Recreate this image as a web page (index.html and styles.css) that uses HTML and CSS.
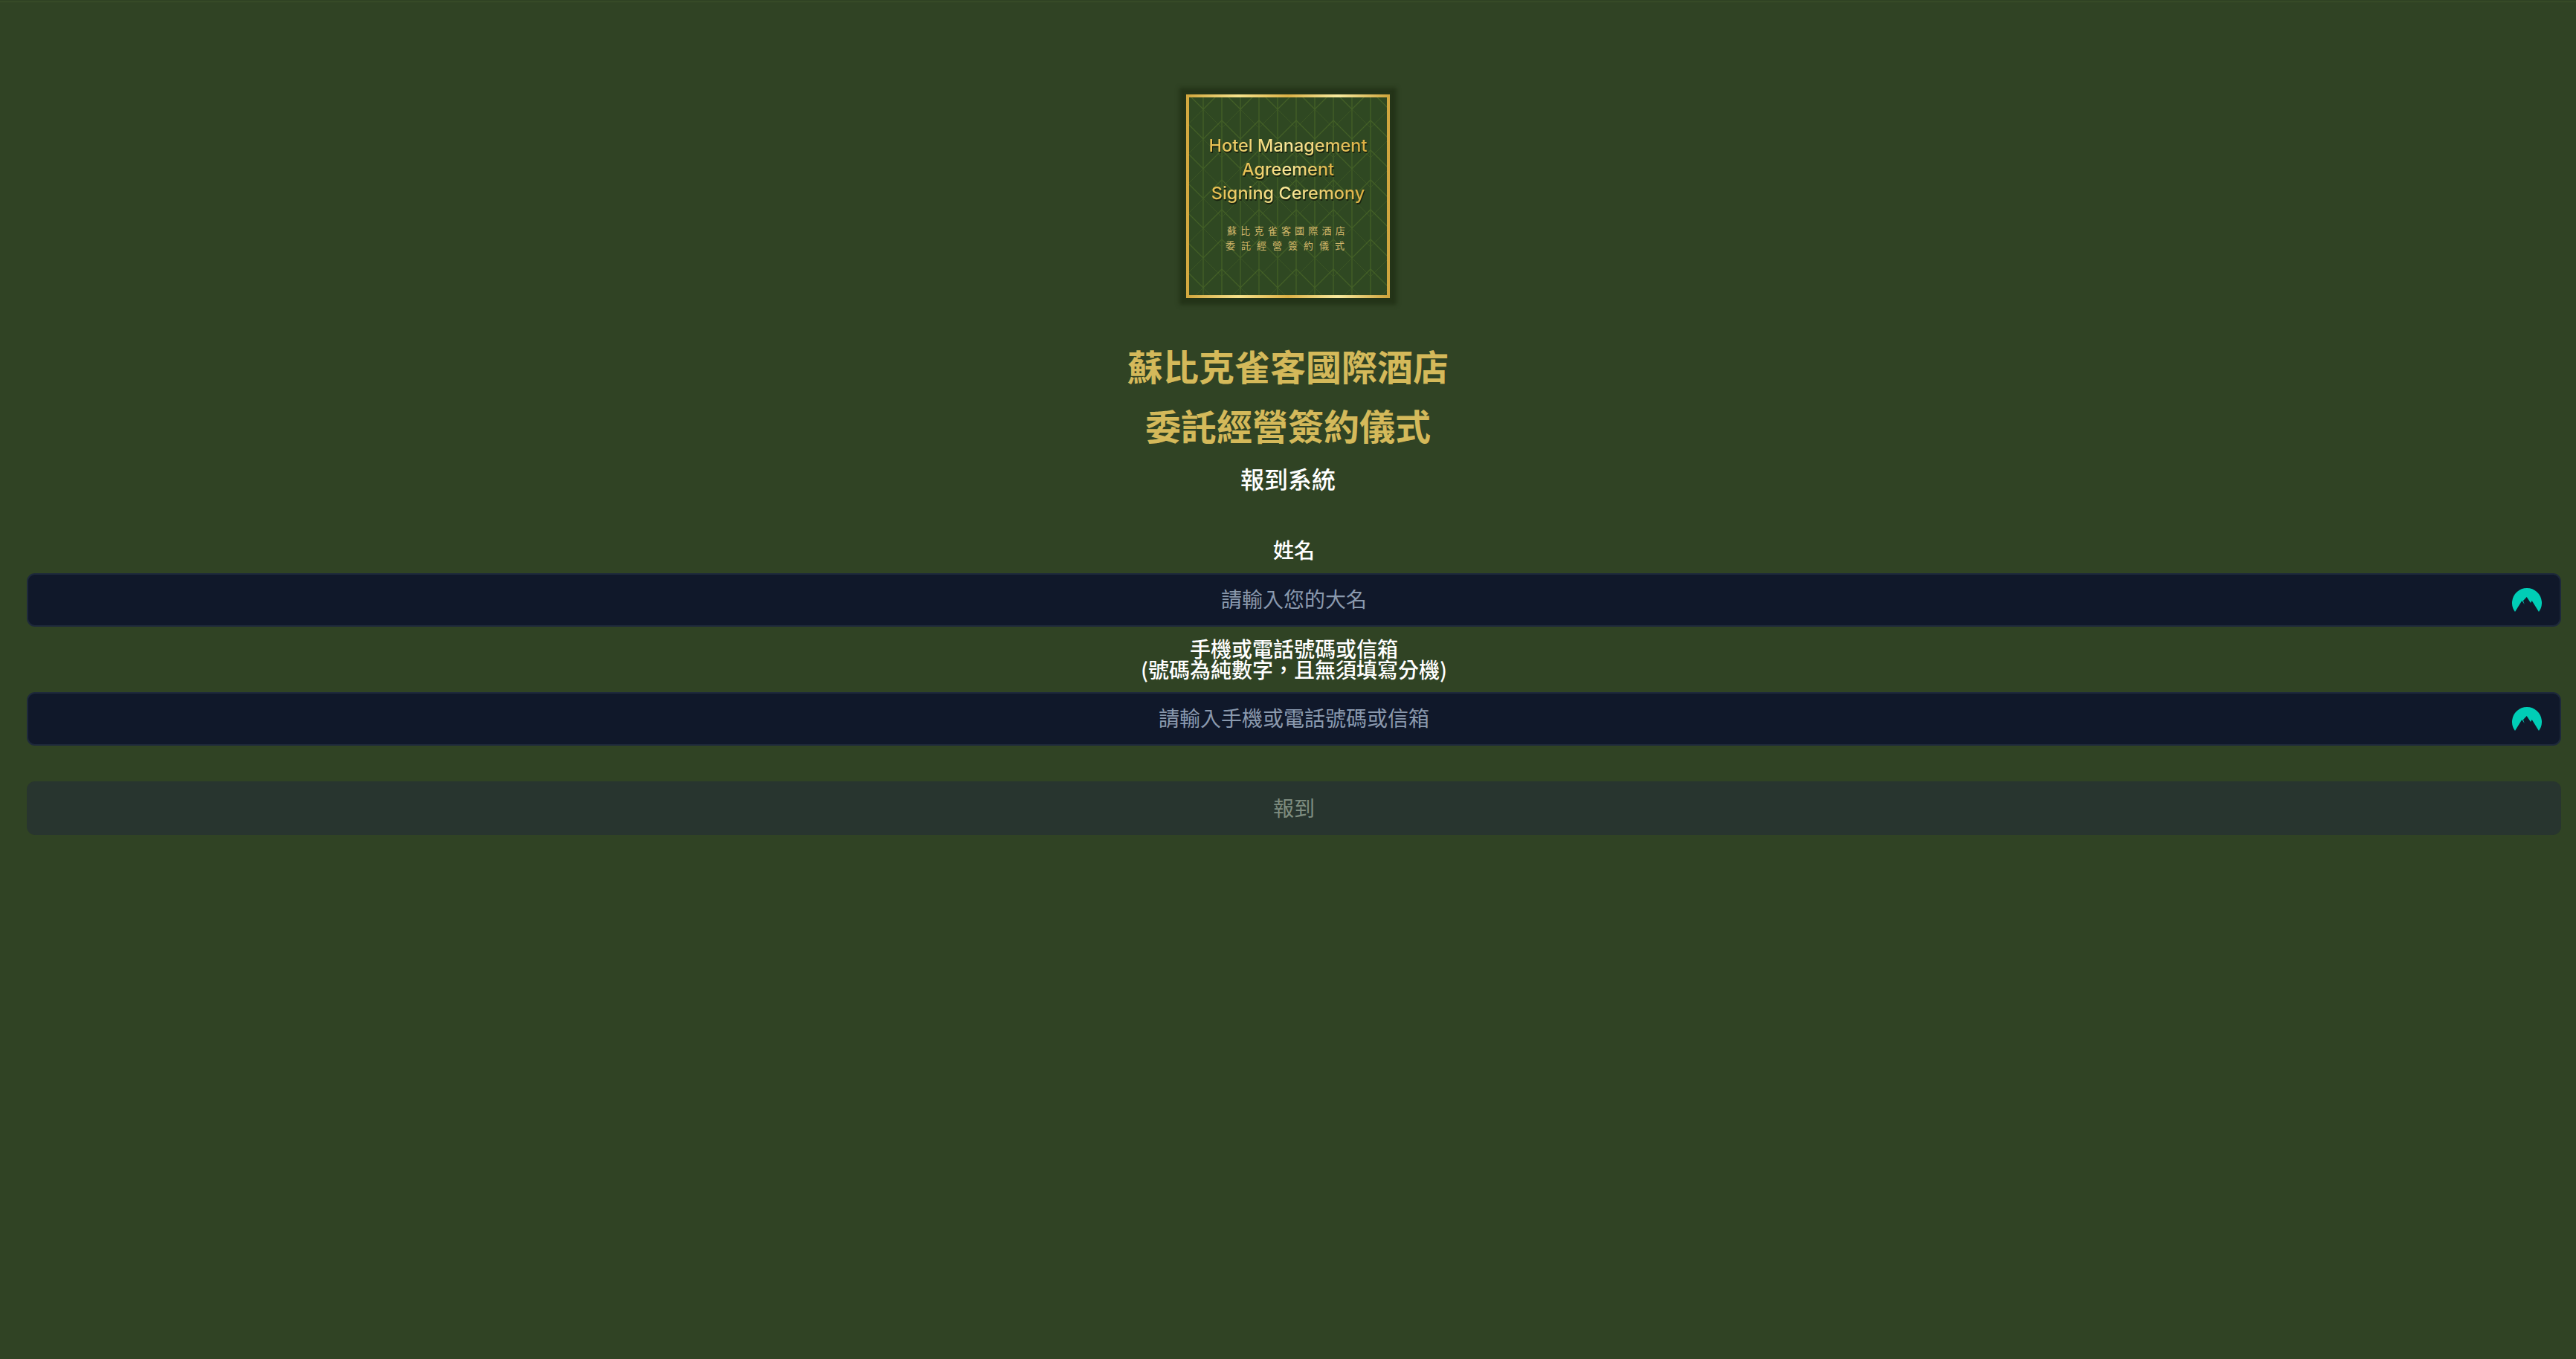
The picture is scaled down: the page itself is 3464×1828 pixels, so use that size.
FILE: index.html
```html
<!DOCTYPE html>
<html lang="zh-Hant">
<head>
<meta charset="utf-8">
<title>報到系統</title>
<link rel="stylesheet" href="styles.css">
</head>
<body>
<main class="page">
  <header class="head">
    <div class="logo">
      <svg class="logo-pattern" width="100%" height="100%" aria-hidden="true">
        <defs>
          <pattern id="leaf" width="50" height="120" patternUnits="userSpaceOnUse" x="-6" y="-14">
            <path d="M25 0V120M0 0V120M50 0V120" fill="none" stroke="#446126" stroke-width="1.2"/>
            <path d="M0 5L25 30L50 5M0 45L25 70L50 45M0 85L25 110L50 85" fill="none" stroke="#446126" stroke-width="1.2"/>
            <path d="M-25 -10L0 15L25 -10L50 15L75 -10M-25 30L0 55L25 30L50 55L75 30M-25 70L0 95L25 70L50 95L75 70M-25 110L0 135L25 110L50 135L75 110" fill="none" stroke="#405c25" stroke-width="1" opacity=".7"/>
          </pattern>
        </defs>
        <rect width="100%" height="100%" fill="url(#leaf)"/>
      </svg>
      <div class="logo-en">
        <span>Hotel Management</span>
        <span>Agreement</span>
        <span>Signing Ceremony</span>
      </div>
      <div class="logo-zh">
        <span class="zh-a">蘇比克雀客國際酒店</span>
        <span class="zh-b">委託經營簽約儀式</span>
      </div>
    </div>
    <h1 class="title">蘇比克雀客國際酒店<br>委託經營簽約儀式</h1>
    <h2 class="subtitle">報到系統</h2>
  </header>
  <form class="form">
    <label class="label label-first" for="name">姓名</label>
    <div class="field">
      <input class="input" id="name" type="text" placeholder="請輸入您的大名">
      <svg class="badge" viewBox="0 0 40 40" aria-hidden="true"><path d="M4 32A20 20 0 1 1 36 32L26.7 17L25 20L19.7 12L15 17L16.7 22L13.3 17Z" fill="#00cdb6"/></svg>
    </div>
    <label class="label" for="contact">手機或電話號碼或信箱<br>(號碼為純數字，且無須填寫分機)</label>
    <div class="field">
      <input class="input" id="contact" type="text" placeholder="請輸入手機或電話號碼或信箱">
      <svg class="badge" viewBox="0 0 40 40" aria-hidden="true"><path d="M4 32A20 20 0 1 1 36 32L26.7 17L25 20L19.7 12L15 17L16.7 22L13.3 17Z" fill="#00cdb6"/></svg>
    </div>
    <button class="submit" type="button" disabled>報到</button>
  </form>
</main>
</body>
</html>
```
FILE: styles.css
```css
* { box-sizing: border-box; }
html, body { margin: 0; height: 100%; }
body {
  background: linear-gradient(#3c5029, #3c5029) 0 2px / 100% 1px no-repeat, #304324;
  font-family: "Noto Sans CJK TC", "Noto Sans", sans-serif;
  color: #fff;
}
.page { padding-top: 127px; }
.head { display: flex; flex-direction: column; align-items: center; }
.logo {
  position: relative;
  width: 274px;
  height: 274px;
  border: 4px solid;
  border-image: linear-gradient(90deg, #d3a83f, #f6e28c, #dcb146, #f8ea9f, #cfa53e) 1;
  background: #2f4822;
  box-shadow: 0 0 5px 9px #243418;
  display: flex;
  flex-direction: column;
  align-items: center;
  overflow: hidden;
}
.logo-pattern { position: absolute; inset: 0; }
.logo-en {
  position: relative;
  margin-top: 49px;
  display: flex;
  flex-direction: column;
  align-items: center;
  font-family: Inter, "Open Sans", sans-serif;
  font-size: 23.5px;
  font-weight: 500;
  line-height: 32px;
  filter: drop-shadow(1px 2px 0 #18230f);
}
.logo-en span {
  background: linear-gradient(90deg, #e6bd4e, #fbe99a 50%, #dcae3f);
  -webkit-background-clip: text;
  background-clip: text;
  color: transparent;
}
.logo-zh {
  position: relative;
  margin-top: 24px;
  display: flex;
  flex-direction: column;
  align-items: center;
  font-size: 13px;
  line-height: 20px;
  color: #d2b76a;
}
.zh-a { letter-spacing: 5.2px; }
.zh-b { letter-spacing: 8px; }
.title {
  margin: 50px 0 0;
  font-size: 48px;
  line-height: 80px;
  font-weight: 700;
  color: #d4b95a;
  text-align: center;
}
.subtitle {
  margin: 8px 0 0;
  font-size: 32px;
  line-height: 48px;
  font-weight: 500;
  text-align: center;
}
.form { display: flex; flex-direction: column; margin-top: 58px; padding: 0 20px 0 36px; }
.label {
  display: block;
  font-size: 28px;
  line-height: 28px;
  font-weight: 500;
  text-align: center;
  padding: 15px 0 17px;
}
.label-first { padding: 0 0 18px; }
.field { position: relative; display: flex; }
.input {
  flex: 1;
  height: 72px;
  padding: 0 2px 4px;
  border: 2px solid #1e293b;
  border-radius: 11px;
  background: #10182a;
  color: #fff;
  font: 28px "Noto Sans CJK TC", sans-serif;
  text-align: center;
  outline: none;
}
.input::placeholder { color: #8a99ae; opacity: 1; }
.badge { position: absolute; right: 26px; top: 20px; width: 40px; height: 40px; }
.submit {
  height: 72px;
  margin-top: 48px;
  padding: 0 0 3px;
  border: 0;
  border-radius: 11px;
  background: #28352f;
  color: #7e8d80;
  font: 28px "Noto Sans CJK TC", sans-serif;
}
```
